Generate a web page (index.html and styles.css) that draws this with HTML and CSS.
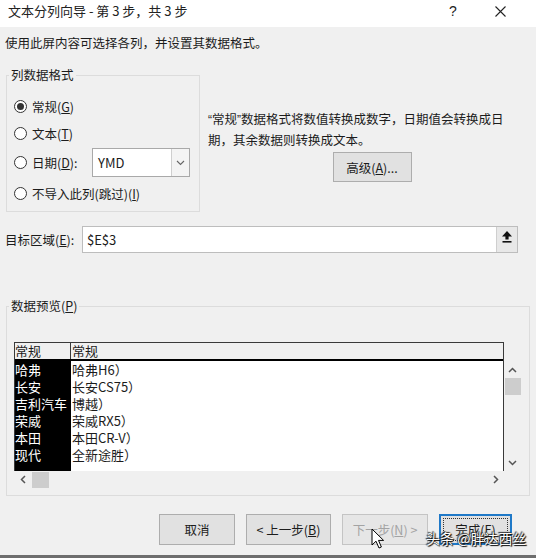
FILE: index.html
```html
<!DOCTYPE html>
<html lang="zh-CN">
<head>
<meta charset="utf-8">
<title>文本分列向导</title>
<link rel="stylesheet" href="styles.css">
</head>
<body>
<div class="titlebar">
  <span class="title">文本分列向导 - 第 3 步，共 3 步</span>
  <span class="help">?</span>
  <svg class="close" width="11" height="11" viewBox="0 0 11 11"><path d="M0.5 0.5 L10.5 10.5 M10.5 0.5 L0.5 10.5" stroke="#222" stroke-width="1.1" fill="none"/></svg>
</div>
<p class="intro">使用此屏内容可选择各列，并设置其数据格式。</p>
<div class="top">
  <fieldset class="group fmt">
    <legend>列数据格式</legend>
    <div class="fmt-body">
      <div class="opt r1"><span class="radio on"></span><span>常规(<u>G</u>)</span></div>
      <div class="opt r2"><span class="radio"></span><span>文本(<u>T</u>)</span></div>
      <div class="opt r3"><span class="radio"></span><span>日期(<u>D</u>):</span>
        <div class="combo"><span class="val">YMD</span><span class="drop"><svg width="9" height="6" viewBox="0 0 9 6"><path d="M1 1 L4.5 4.5 L8 1" stroke="#666" stroke-width="1.1" fill="none"/></svg></span></div>
      </div>
      <div class="opt r4"><span class="radio"></span><span>不导入此列(跳过)(<u>I</u>)</span></div>
    </div>
  </fieldset>
  <div class="desc">
    <p><span class="q">“</span>常规<span class="q">”</span>数据格式将数值转换成数字，日期值会转换成日<br>期，其余数据则转换成文本。</p>
    <button class="btn adv">高级(<u>A</u>)...</button>
  </div>
</div>
<div class="target">
  <span class="tlabel">目标区域(<u>E</u>):</span>
  <div class="input">
    <span class="ival">$E$3</span>
    <span class="pick"><svg width="10" height="12" viewBox="0 0 10 12"><path d="M5 0 L10 5.5 H6.6 V8.5 H3.4 V5.5 H0 Z" fill="#111"/><rect x="0.5" y="10" width="9" height="1.6" fill="#111"/></svg></span>
  </div>
</div>
<fieldset class="group preview">
  <legend>数据预览(<u>P</u>)</legend>
  <div class="pv-body">
    <div class="grid">
      <div class="table">
        <div class="thead"><span class="c1">常规</span><span class="c2">常规</span></div>
        <div class="tbody">
          <div class="c1">
            <div>哈弗</div><div>长安</div><div>吉利汽车</div><div>荣威</div><div>本田</div><div>现代</div>
          </div>
          <div class="c2">
            <div>哈弗H6）</div><div>长安CS75）</div><div>博越）</div><div>荣威RX5）</div><div>本田CR-V）</div><div>全新途胜）</div>
          </div>
        </div>
      </div>
      <div class="vscroll">
        <span class="sbtn"><svg width="9" height="6" viewBox="0 0 9 6"><path d="M1 5 L4.5 1.5 L8 5" stroke="#555" stroke-width="1.5" fill="none"/></svg></span>
        <span class="vthumb"></span>
        <span class="vspace"></span>
        <span class="sbtn"><svg width="9" height="6" viewBox="0 0 9 6"><path d="M1 1 L4.5 4.5 L8 1" stroke="#555" stroke-width="1.5" fill="none"/></svg></span>
      </div>
    </div>
    <div class="hscroll">
      <span class="sbtn"><svg width="6" height="9" viewBox="0 0 6 9"><path d="M5 1 L1.5 4.5 L5 8" stroke="#555" stroke-width="1.5" fill="none"/></svg></span>
      <span class="hthumb"></span>
      <span class="hspace"></span>
      <span class="sbtn"><svg width="6" height="9" viewBox="0 0 6 9"><path d="M1 1 L4.5 4.5 L1 8" stroke="#555" stroke-width="1.5" fill="none"/></svg></span>
    </div>
  </div>
</fieldset>
<div class="actions">
  <button class="btn cancel">取消</button>
  <button class="btn back">&lt; 上一步(<u>B</u>)</button>
  <button class="btn next" disabled>下一步(<u>N</u>) &gt;</button>
  <button class="btn finish">完成(<u>F</u>)</button>
</div>
<div class="strip"></div>
<div class="watermark">头条 @胖达西丝</div>
<svg class="cursor" width="14" height="22" viewBox="0 0 14 22"><path d="M1 1 L1 17 L5 13.2 L8 20 L10.4 19 L7.5 12.4 L12.6 12.4 Z" fill="#fff" stroke="#000" stroke-width="1" stroke-linejoin="round"/></svg>
</body>
</html>
```

FILE: styles.css
```css
* { box-sizing: border-box; }
html, body { margin: 0; padding: 0; }
body {
  width: 536px;
  height: 558px;
  overflow: hidden;
  background: #f0f0f0;
  font-family: "Noto Sans CJK SC", "Noto Sans", sans-serif;
  font-size: 12.5px;
  color: #1c1c1c;
  display: flex;
  flex-direction: column;
  position: relative;
}
u { text-decoration: underline; text-underline-offset: 1px; }

.titlebar {
  height: 27px;
  flex: none;
  background: #fff;
  display: flex;
  align-items: flex-start;
  padding: 3px 30px 0 8px;
  line-height: 16px;
}
.title { flex: 1; font-size: 13px; color: #222; }
.help { width: 20px; text-align: center; font-family: "Liberation Sans", sans-serif; font-size: 14px; margin-right: 32px; color: #222; }
.close { margin-top: 3px; }

.intro { margin: 8px 0 0 5px; line-height: 16px; height: 16px; }

.top { display: flex; align-items: flex-start; margin-top: 16px; }

.group {
  margin: 0;
  padding: 0;
  border: 1px solid #dcdcdc;
  min-width: 0;
}
.group legend {
  padding: 0 2px;
  margin-left: 2px;
  line-height: 16px;
}
.fmt { margin-left: 6px; width: 194px; }
.fmt-body { padding: 10px 9px 3px 7px; }
.opt { display: flex; align-items: center; }
.r1, .r2 { height: 27px; }
.r3 { height: 31px; }
.r4 { height: 30px; }
.radio {
  width: 13px;
  height: 13px;
  border: 1px solid #333;
  border-radius: 50%;
  background: #fff;
  margin-right: 5px;
  position: relative;
  flex: none;
}
.radio.on::after {
  content: "";
  position: absolute;
  left: 2px;
  top: 2px;
  width: 7px;
  height: 7px;
  border-radius: 50%;
  background: #333;
}
.combo {
  margin-left: auto;
  width: 98px;
  height: 29px;
  border: 1px solid #a9a9a9;
  background: #fff;
  display: flex;
}
.combo .val { flex: 1; padding-left: 5px; line-height: 27px; font-size: 13px; }
.combo .drop {
  width: 18px;
  border-left: 1px solid #cfcfcf;
  background: #f4f4f4;
  display: flex;
  align-items: center;
  justify-content: center;
}

.desc {
  margin-left: 8px;
  padding-top: 42px;
  flex: 1;
  display: flex;
  flex-direction: column;
  align-items: center;
}
.desc p { margin: 0; line-height: 19px; white-space: nowrap; align-self: flex-start; }
.q { font-family: "Liberation Sans", sans-serif; font-size: 12px; }

.btn {
  font: inherit;
  color: #1c1c1c;
  background: #e1e1e1;
  border: 1px solid #adadad;
  padding: 0;
  height: 31px;
}
.adv { width: 79px; height: 30px; margin-top: 3px; }

.target { display: flex; align-items: center; margin-top: 14px; height: 27px; }
.tlabel { padding-left: 5px; }
.input {
  margin-left: auto;
  margin-right: 18px;
  width: 436px;
  height: 27px;
  border: 1px solid #bdbdbd;
  background: #fff;
  display: flex;
}
.ival { flex: 1; padding-left: 4px; line-height: 25px; font-size: 13px; }
.pick {
  width: 21px;
  background: #e8e8e8;
  border-left: 1px solid #cfcfcf;
  display: flex;
  justify-content: center;
  align-items: flex-start;
  padding-top: 4px;
}

.preview { margin: 45px 0 0 6px; width: 524px; }
.pv-body { padding: 28px 0 7px 7px; }
.grid { display: flex; align-items: flex-start; }
.table {
  width: 490px;
  height: 129px;
  border: 1px solid #3a3a3a;
  border-bottom: none;
  display: flex;
  flex-direction: column;
  font-size: 13px;
}
.thead {
  height: 18px;
  background: #f0f0f0;
  border-bottom: 2px solid #000;
  display: flex;
  line-height: 16px;
}
.thead .c1 { width: 56px; border-right: 1px solid #3a3a3a; }
.thead .c2 { flex: 1; padding-left: 1px; }
.tbody { flex: 1; display: flex; background: #fff; line-height: 17px; }
.tbody .c1 { width: 56px; background: #000; color: #fff; white-space: nowrap; }
.tbody .c2 { flex: 1; padding-left: 1px; }

.vscroll { width: 17px; height: 110px; margin-top: 19px; display: flex; flex-direction: column; }
.sbtn { width: 17px; height: 17px; display: flex; align-items: center; justify-content: center; flex: none; }
.vthumb { width: 16px; height: 17px; margin-left: 1px; background: #cdcdcd; flex: none; }
.vspace { flex: 1; }
.hscroll { width: 490px; height: 17px; display: flex; align-items: center; }
.hthumb { width: 17px; height: 16px; margin-left: 1px; background: #cdcdcd; flex: none; }
.hspace { flex: 1; }

.actions {
  display: flex;
  justify-content: flex-end;
  gap: 11px;
  margin-top: 18px;
  padding-right: 24px;
}
.cancel { width: 76px; }
.back { width: 85px; }
.next { width: 86px; color: #a3a3a3; background: #e6e6e6; border-color: #c4c4c4; }
.finish {
  width: 73px;
  border: 2px solid #1f79c8;
  position: relative;
}
.finish::after {
  content: "";
  position: absolute;
  left: 2px;
  top: 2px;
  right: 2px;
  bottom: 2px;
  border: 1px dotted #333;
}

.strip { margin-top: auto; height: 3px; background: #6e6e6e; flex: none; }

.watermark {
  position: absolute;
  left: 426px;
  top: 529px;
  font-size: 14px;
  line-height: 18px;
  color: #fff;
  text-shadow: 0 0 1px #000, 1px 1px 1px #000, -1px -1px 1px #333;
}
.cursor { position: absolute; left: 371px; top: 528px; }
```
